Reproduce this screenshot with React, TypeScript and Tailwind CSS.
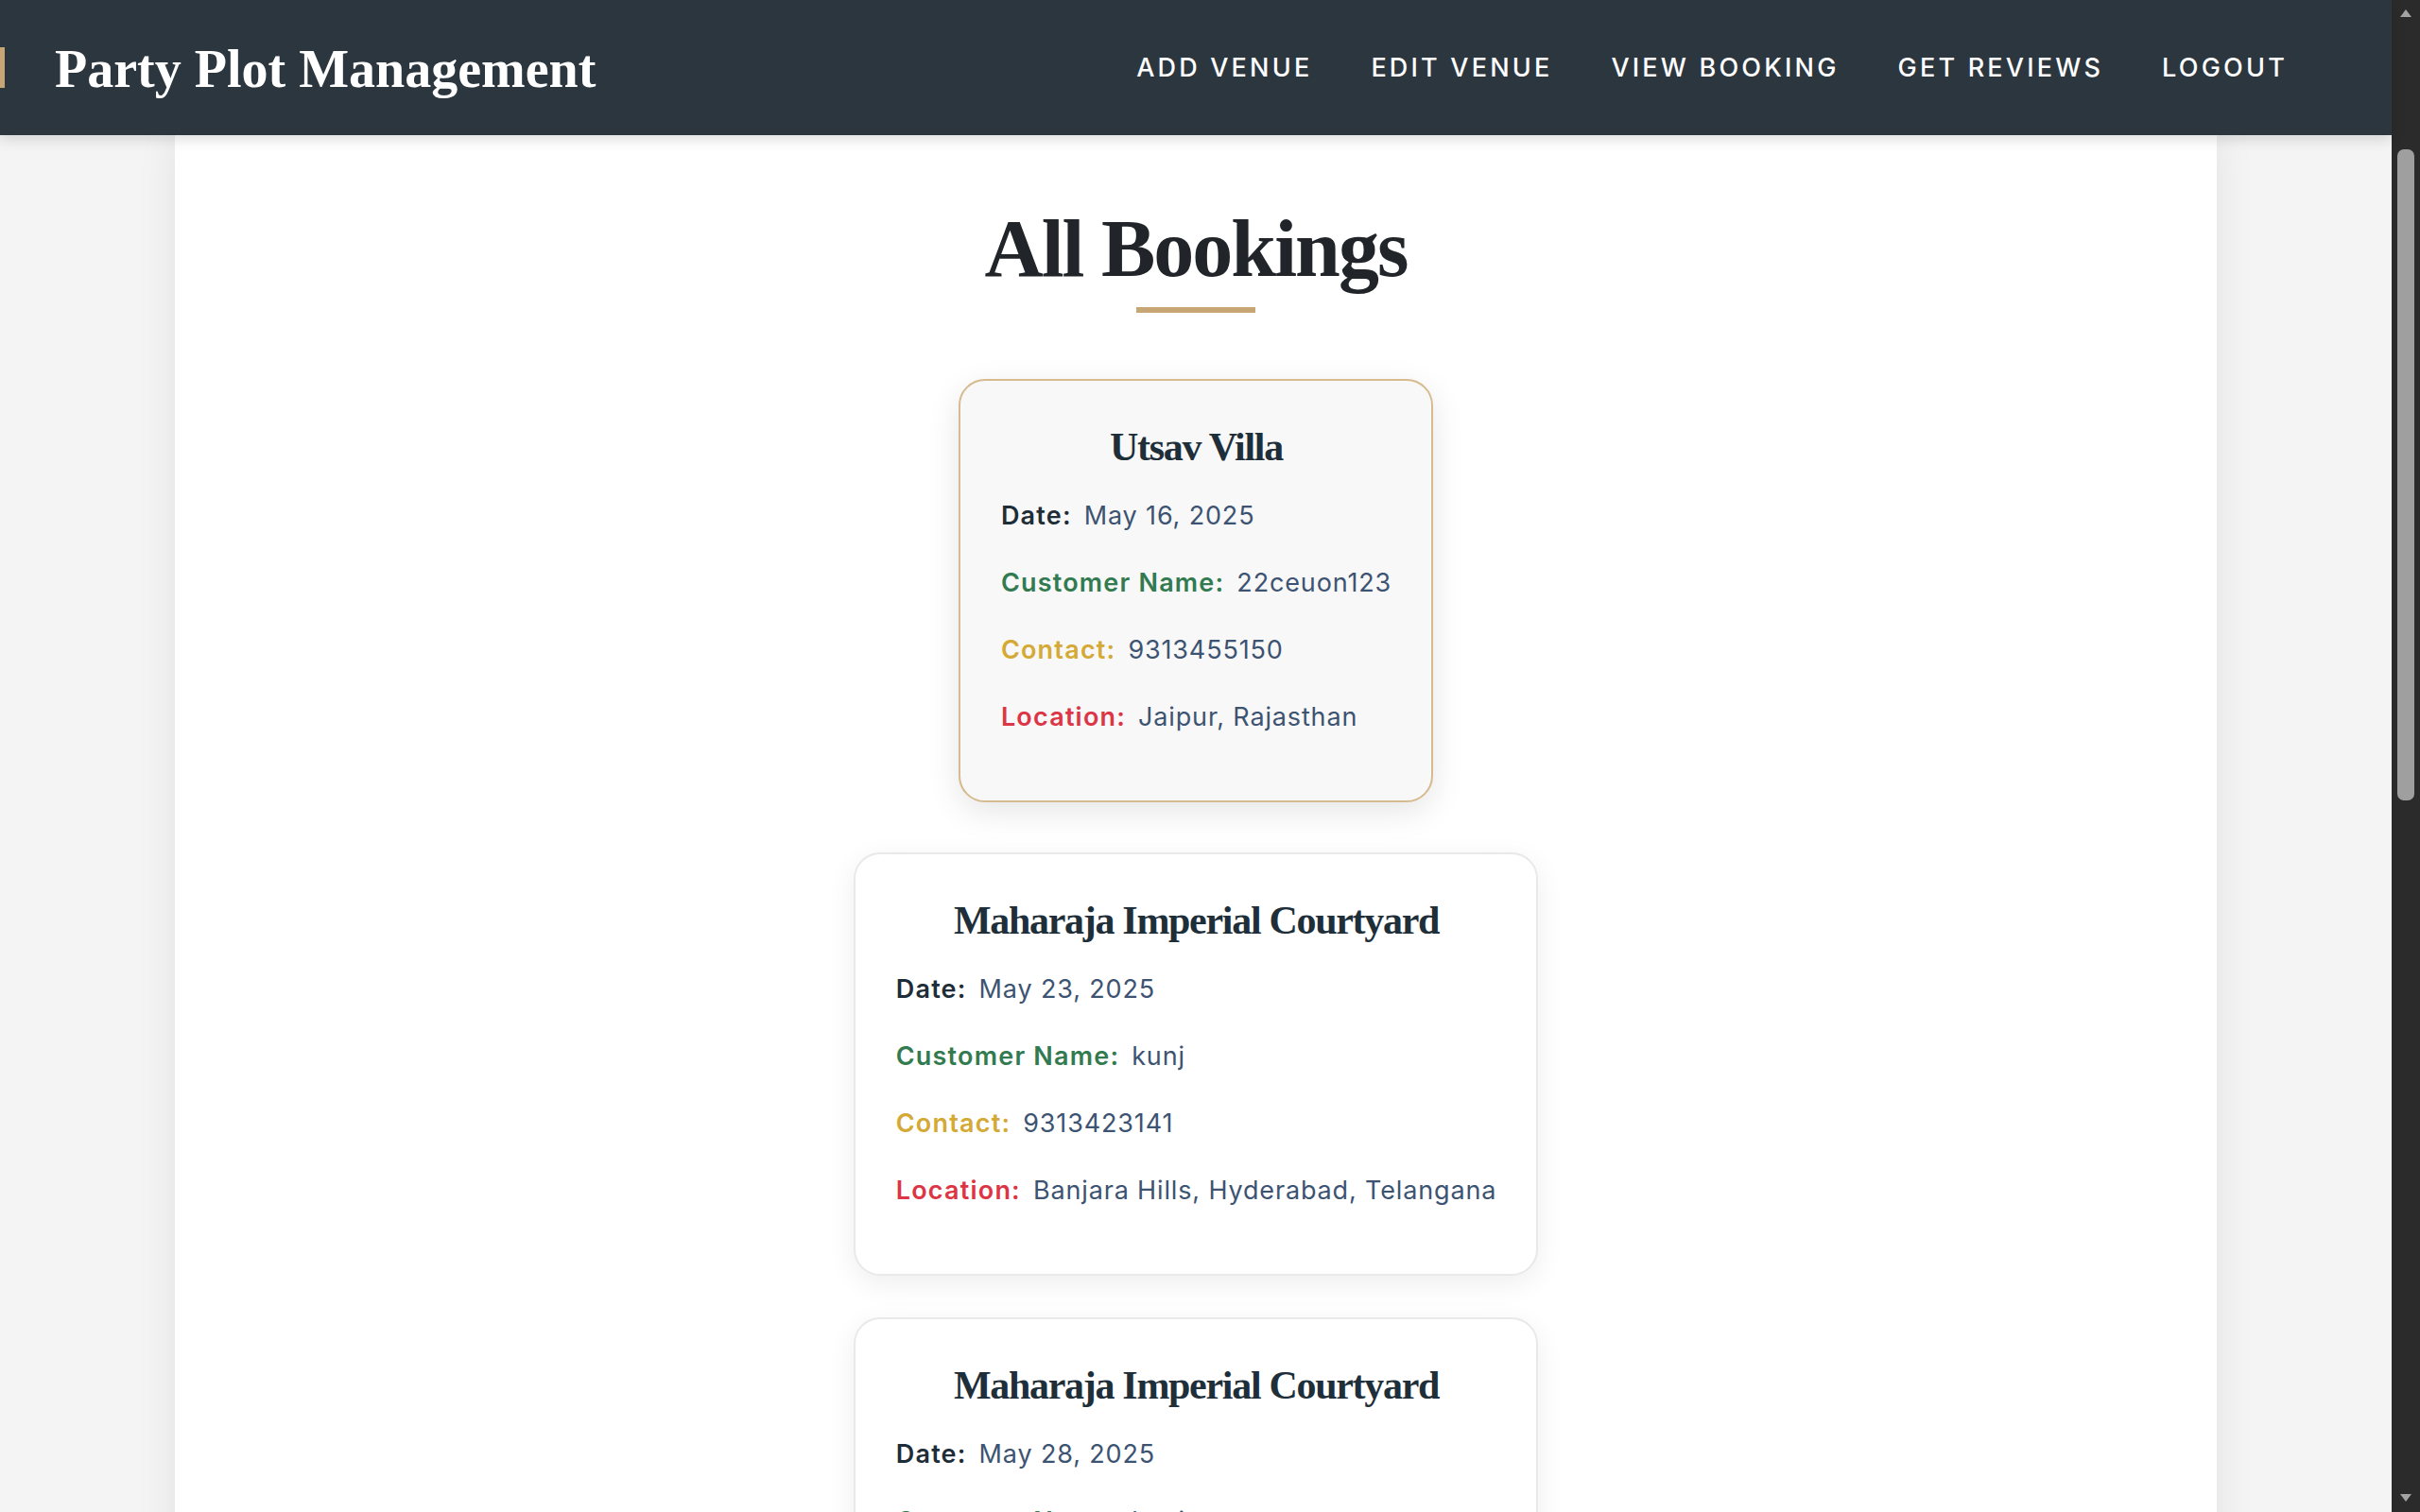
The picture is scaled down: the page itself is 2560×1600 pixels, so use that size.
import React from "react";

type Booking = {
  venue: string;
  date: string;
  customer: string;
  contact: string;
  location: string;
};

const bookings: Booking[] = [
  {
    venue: "Utsav Villa",
    date: "May 16, 2025",
    customer: "22ceuon123",
    contact: "9313455150",
    location: "Jaipur, Rajasthan",
  },
  {
    venue: "Maharaja Imperial Courtyard",
    date: "May 23, 2025",
    customer: "kunj",
    contact: "9313423141",
    location: "Banjara Hills, Hyderabad, Telangana",
  },
  {
    venue: "Maharaja Imperial Courtyard",
    date: "May 28, 2025",
    customer: "kunj",
    contact: "9313423141",
    location: "Banjara Hills, Hyderabad, Telangana",
  },
];

const navItems = ["ADD VENUE", "EDIT VENUE", "VIEW BOOKING", "GET REVIEWS", "LOGOUT"];

function Row({ label, value, labelClass }: { label: string; value: string; labelClass: string }) {
  return (
    <div className="whitespace-nowrap text-[27px] leading-[40px] tracking-[0.85px]">
      <span className={"font-semibold tracking-[1.2px] mr-[13px] " + labelClass}>{label}</span>
      <span className="text-[#3d5372]">{value}</span>
    </div>
  );
}

function BookingCard({ b, active }: { b: Booking; active: boolean }) {
  return (
    <div
      className={
        active
          ? "w-fit rounded-[28px] border-2 border-[#d6bb8f] bg-[#f8f8f8] pt-[49px] pb-[68px] pl-[43px] pr-[42px] -translate-y-[9px] shadow-[0_10px_34px_rgba(0,0,0,0.10)]"
          : "w-fit rounded-[28px] border-2 border-[#e9e9e9] bg-white pt-[49px] pb-[68px] pl-[43px] pr-[42px] shadow-[0_8px_30px_rgba(0,0,0,0.07)]"
      }
    >
      <h3 className="text-center font-['Liberation_Serif',serif] font-bold text-[42px] leading-none tracking-[-1.3px] text-[#1e2f3a]">
        {b.venue}
      </h3>
      <div className="mt-[32px] flex flex-col gap-[31px] font-['Inter',sans-serif]">
        <Row label="Date:" value={b.date} labelClass="text-[#1e2d37]" />
        <Row label="Customer Name:" value={b.customer} labelClass="text-[#327a50]" />
        <Row label="Contact:" value={b.contact} labelClass="text-[#d4a935]" />
        <Row label="Location:" value={b.location} labelClass="text-[#dc3545]" />
      </div>
    </div>
  );
}

export default function App() {
  return (
    <div className="flex h-screen w-full overflow-hidden bg-[#f4f4f4]">
      <div className="flex min-w-0 flex-1 flex-col">
        <header className="relative z-10 flex h-[143px] shrink-0 items-center justify-between bg-[#2c363f] pr-[110px] shadow-[0_4px_14px_rgba(0,0,0,0.14)]">
          <div className="flex items-center gap-[53px]">
            <div className="h-[43px] w-[5px] bg-[#c8a574]" />
            <div className="mt-[3px] font-['Liberation_Serif',serif] text-[56px] font-bold leading-none text-white">
              Party Plot Management
            </div>
          </div>
          <nav className="flex items-center gap-[62px] font-['Inter',sans-serif] text-[27px] font-medium leading-none tracking-[3.2px] text-white">
            {navItems.map((n) => (
              <span key={n} className="whitespace-nowrap">
                {n}
              </span>
            ))}
          </nav>
        </header>
        <main className="min-h-0 flex-1 overflow-hidden">
          <div className="mx-auto flex min-h-full w-[2160px] flex-col items-center bg-white pt-[77px] pb-[80px] shadow-[0_0_40px_rgba(0,0,0,0.08)]">
            <h1 className="font-['Liberation_Serif',serif] text-[86px] font-bold leading-none tracking-[-2px] text-[#212529]">
              All Bookings
            </h1>
            <div className="mt-[19px] h-[6px] w-[126px] bg-[#c8a574]" />
            <div className="mt-[79px] flex flex-col items-center gap-[44px]">
              {bookings.map((b, i) => (
                <BookingCard key={i} b={b} active={i === 0} />
              ))}
            </div>
          </div>
        </main>
      </div>
      <div className="flex w-[30px] shrink-0 flex-col items-center bg-[#2b2b2b]">
        <svg className="mt-[9px]" width="14" height="10" viewBox="0 0 14 10">
          <polygon points="7,1 13,9 1,9" fill="#a3a3a3" />
        </svg>
        <div className="mt-[139px] h-[689px] w-[18px] rounded-[7px] bg-[#9f9f9f]" />
        <div className="flex-1" />
        <svg className="mb-[10px]" width="14" height="10" viewBox="0 0 14 10">
          <polygon points="1,1 13,1 7,9" fill="#a3a3a3" />
        </svg>
      </div>
    </div>
  );
}
